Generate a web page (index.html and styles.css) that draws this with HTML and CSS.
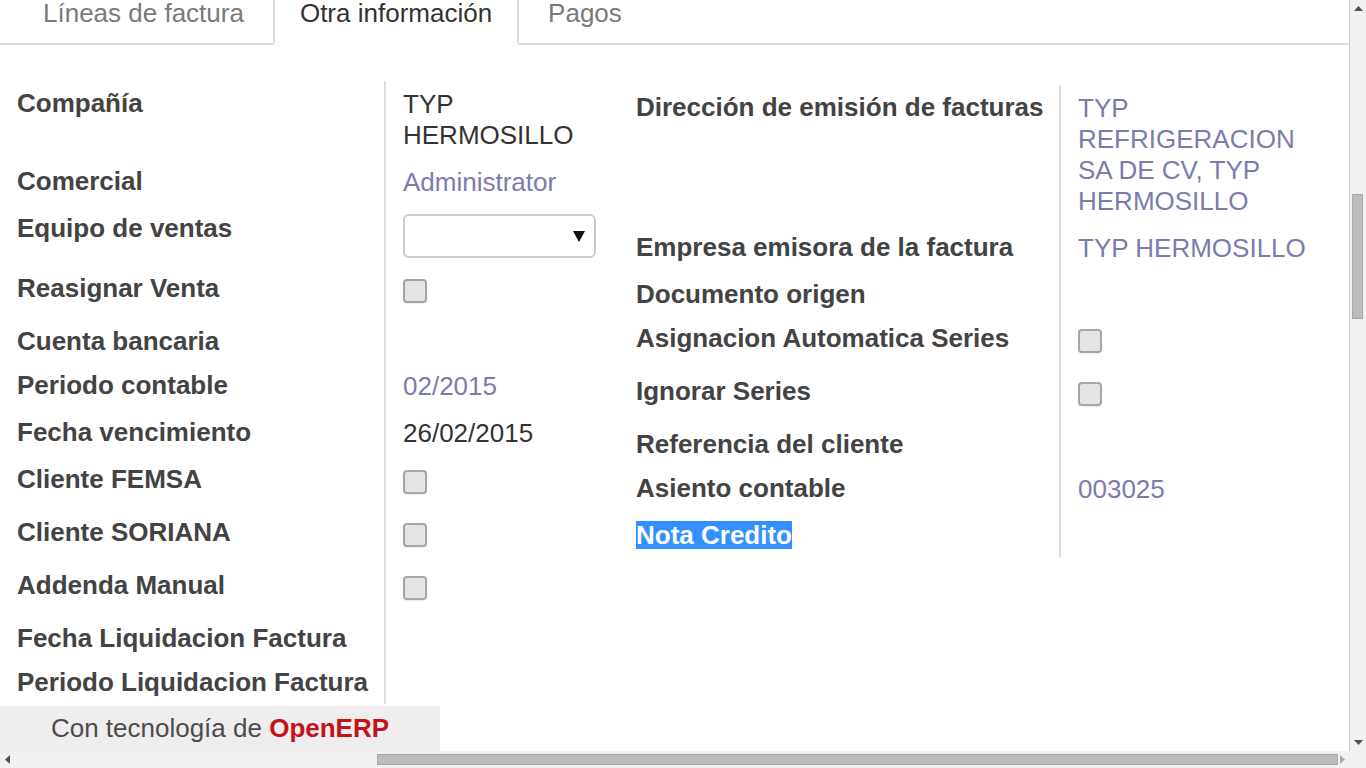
FILE: index.html
```html
<!DOCTYPE html>
<html lang="es">
<head>
<meta charset="utf-8">
<title>Factura - Otra información</title>
<link rel="stylesheet" href="styles.css">
</head>
<body>
<div class="window">
  <div class="viewport">
    <div class="page">
      <ul class="tabs">
        <li class="tab"><a>Líneas de factura</a></li>
        <li class="tab active"><a>Otra información</a></li>
        <li class="tab"><a>Pagos</a></li>
      </ul>

      <div class="form">
        <div class="group group-left">
          <div class="lbl">Compañía</div>
          <div class="val">TYP HERMOSILLO</div>

          <div class="lbl">Comercial</div>
          <div class="val link">Administrator</div>

          <div class="lbl">Equipo de ventas</div>
          <div class="val">
            <div class="select">
              <svg class="caret" width="12" height="11" viewBox="0 0 12 11"><polygon points="0,0 12,0 6,11" fill="#111"/></svg>
            </div>
          </div>

          <div class="lbl">Reasignar Venta</div>
          <div class="val"><span class="check"></span></div>

          <div class="lbl">Cuenta bancaria</div>
          <div class="val"></div>

          <div class="lbl">Periodo contable</div>
          <div class="val link">02/2015</div>

          <div class="lbl">Fecha vencimiento</div>
          <div class="val">26/02/2015</div>

          <div class="lbl">Cliente FEMSA</div>
          <div class="val"><span class="check"></span></div>

          <div class="lbl">Cliente SORIANA</div>
          <div class="val"><span class="check"></span></div>

          <div class="lbl">Addenda Manual</div>
          <div class="val"><span class="check"></span></div>

          <div class="lbl">Fecha Liquidacion Factura</div>
          <div class="val"></div>

          <div class="lbl">Periodo Liquidacion Factura</div>
          <div class="val"></div>
        </div>

        <div class="group group-right">
          <div class="lbl">Dirección de emisión de facturas</div>
          <div class="val link">TYP REFRIGERACION SA DE CV, TYP HERMOSILLO</div>

          <div class="lbl">Empresa emisora de la factura</div>
          <div class="val link">TYP HERMOSILLO</div>

          <div class="lbl">Documento origen</div>
          <div class="val"></div>

          <div class="lbl">Asignacion Automatica Series</div>
          <div class="val"><span class="check"></span></div>

          <div class="lbl">Ignorar Series</div>
          <div class="val"><span class="check"></span></div>

          <div class="lbl">Referencia del cliente</div>
          <div class="val"></div>

          <div class="lbl">Asiento contable</div>
          <div class="val link">003025</div>

          <div class="lbl"><span class="selected">Nota Credito</span></div>
          <div class="val"></div>
        </div>
      </div>

      <div class="footer">Con tecnología de <span class="brand">OpenERP</span></div>
    </div>

    <div class="vscroll">
      <div class="arrow-box">
        <svg width="9" height="5" viewBox="0 0 9 5"><polygon points="0,5 9,5 4.5,0" fill="#505050"/></svg>
      </div>
      <div class="vtrack">
        <div class="vthumb"></div>
      </div>
      <div class="arrow-box">
        <svg width="9" height="5" viewBox="0 0 9 5"><polygon points="0,0 9,0 4.5,5" fill="#505050"/></svg>
      </div>
    </div>
  </div>

  <div class="hscroll">
    <div class="harrow">
      <svg width="5" height="9" viewBox="0 0 5 9"><polygon points="5,0 5,9 0,4.5" fill="#505050"/></svg>
    </div>
    <div class="htrack">
      <div class="hthumb"></div>
    </div>
    <div class="harrow">
      <svg width="5" height="9" viewBox="0 0 5 9"><polygon points="0,0 0,9 5,4.5" fill="#a8a8a8"/></svg>
    </div>
    <div class="corner"></div>
  </div>
</div>
</body>
</html>
```

FILE: styles.css
```css
html, body {
  margin: 0;
  padding: 0;
  height: 768px;
  overflow: hidden;
  background: #ffffff;
  font-family: "Liberation Sans", Arial, sans-serif;
  font-size: 26px;
  color: #404040;
}

.window {
  display: flex;
  flex-direction: column;
  width: 1366px;
  height: 768px;
}

.viewport {
  display: flex;
  height: 751px;
}

.page {
  width: 1349px;
  height: 751px;
  display: flex;
  flex-direction: column;
  overflow: hidden;
  background: #fff;
}

/* Tabs */
.tabs {
  list-style: none;
  margin: -20px 0 0 0;
  padding: 0 0 0 16px;
  display: flex;
  border-bottom: 2px solid #dddddd;
}

.tab {
  margin-bottom: -2px;
  margin-right: 2px;
}

.tab a {
  display: block;
  padding: 16px 25px 14px;
  line-height: 31px;
  border: 2px solid transparent;
  border-radius: 6px 6px 0 0;
  color: #7a7a7a;
}

.tab.active a {
  border-color: #dddddd #dddddd transparent;
  background: #ffffff;
  color: #333333;
}

/* Form */
.form {
  display: flex;
  align-items: flex-start;
  padding-top: 36px;
}

.group {
  display: grid;
}

.group-left {
  grid-template-columns: 386px 234px;
}

.group-right {
  grid-template-columns: 441px 288px;
  margin-top: 4px;
}

.lbl {
  box-sizing: border-box;
  padding: 8px 16px 8px 17px;
  border-right: 2px solid #dddddd;
  font-weight: bold;
  line-height: 28px;
  white-space: nowrap;
  color: #434343;
}

.group-right .lbl {
  padding-left: 16px;
}

.val {
  box-sizing: border-box;
  padding: 8px 17px;
  line-height: 31px;
  color: #333333;
}

.val.link {
  color: #7c7bad;
}

.select {
  box-sizing: border-box;
  width: 193px;
  height: 44px;
  border: 2px solid #cccccc;
  border-radius: 6px;
  display: flex;
  align-items: center;
  justify-content: flex-end;
  padding-right: 9px;
}

.caret {
  display: block;
}

.check {
  display: block;
  box-sizing: border-box;
  width: 24px;
  height: 24px;
  margin: 5px 0 8px;
  border: 2px solid #a6a6a6;
  border-radius: 4px;
  background: #e4e4e4;
  box-shadow: 0 1px 1px rgba(0, 0, 0, 0.08);
}

.selected {
  display: inline-block;
  background: #3390ff;
  color: #ffffff;
  line-height: 28px;
}

/* Footer */
.footer {
  margin-top: auto;
  width: 440px;
  height: 45px;
  line-height: 45px;
  background: #efeded;
  text-align: center;
  color: #4c4c4c;
}

.brand {
  color: #c4121a;
  font-weight: bold;
}

/* Scrollbars */
.vscroll {
  box-sizing: border-box;
  width: 17px;
  height: 751px;
  background: #f1f1f1;
  border-left: 1px solid #cdc9d6;
  display: flex;
  flex-direction: column;
}

.arrow-box {
  height: 17px;
  display: flex;
  align-items: center;
  justify-content: center;
}

.vtrack {
  flex: 1;
}

.vthumb {
  box-sizing: border-box;
  width: 11px;
  height: 125px;
  margin: 177px 0 0 2px;
  background: #bcbcbc;
  border: 1px solid #a8a8a8;
}

.hscroll {
  display: flex;
  height: 17px;
  background: #f1f1f1;
}

.harrow {
  width: 14px;
  display: flex;
  align-items: center;
  justify-content: center;
}

.htrack {
  width: 1321px;
}

.hthumb {
  box-sizing: border-box;
  width: 961px;
  height: 11px;
  margin: 3px 0 0 363px;
  background: #bcbcbc;
  border: 1px solid #a8a8a8;
}

.corner {
  width: 17px;
  background: #f1f1f1;
}
```
